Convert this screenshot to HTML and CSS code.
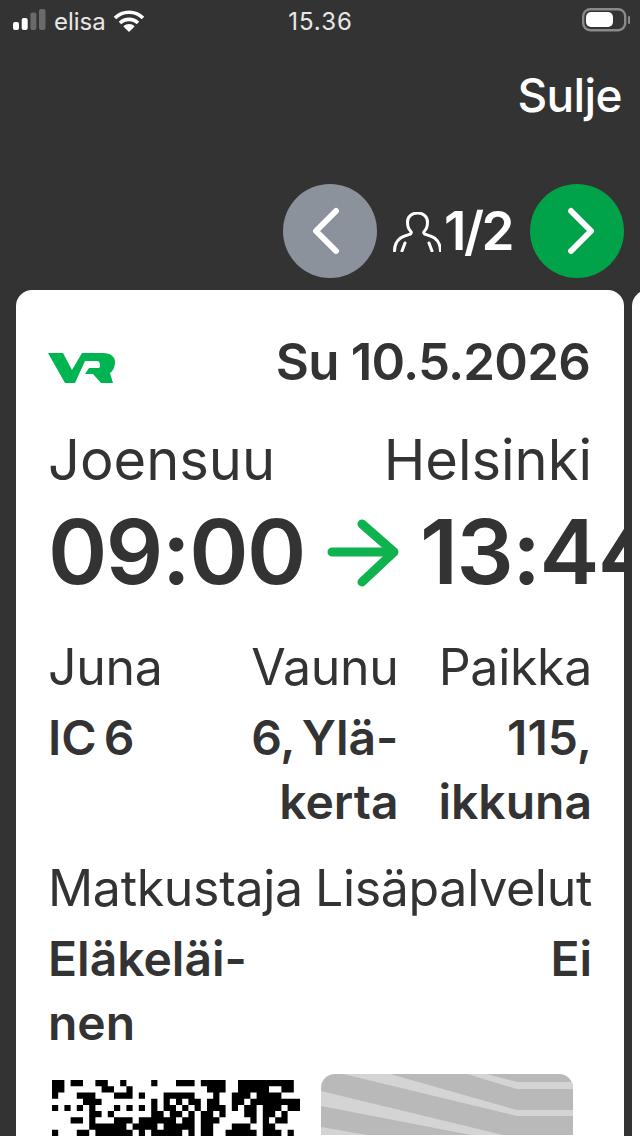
FILE: index.html
```html
<!DOCTYPE html>
<html lang="fi">
<head>
<meta charset="utf-8">
<title>Lippu</title>
<link rel="stylesheet" href="styles.css">
</head>
<body>
<div class="status">
  <div class="status-left">
    <svg class="signal" width="35" height="24" viewBox="0 0 35 24"><rect x="1" y="13" width="6" height="8" rx="2" fill="#fff"/><rect x="9.700" y="9" width="6" height="12" rx="2" fill="#fff"/><rect x="18.400" y="3.500" width="6" height="17.500" rx="2" fill="#6a6a6a"/><rect x="27" y="0" width="6.500" height="21" rx="2" fill="#6a6a6a"/></svg>
    <span>elisa</span>
    <svg class="wifi" width="32" height="24" viewBox="0 0 32 24"><path d="M2 9a20 20 0 0 1 28 0M7 14a13 13 0 0 1 18 0M11.500 18.500a6.500 6.500 0 0 1 9 0" fill="none" stroke="#fff" stroke-width="3.600"/><path d="M16 23l-4-4a6 6 0 0 1 8 0z" fill="#fff"/></svg>
  </div>
  <div class="clock">15.36</div>
  <div class="status-right">
    <svg width="48" height="26" viewBox="0 0 48 26"><rect x="1.200" y="1.200" width="42" height="21" rx="7" fill="none" stroke="#8a8a8a" stroke-width="2.400"/><rect x="4" y="4" width="27" height="15" rx="5" fill="#fff"/><rect x="46" y="8" width="2" height="8" rx="1" fill="#8a8a8a"/></svg>
  </div>
</div>
<div class="close-row"><span>Sulje</span></div>
<div class="nav-row">
  <div class="circle grey"><svg width="40" height="48" viewBox="0 0 40 48"><path d="M26 4L6 24l20 20" fill="none" stroke="#fff" stroke-width="6" stroke-linecap="round" stroke-linejoin="round"/></svg></div>
  <div class="count">
    <svg width="48" height="40" viewBox="0 0 48 40"><path d="M1.500 39c0-6 2-10 6-13 3-2 7-3 10-4 1-1 1-2 0-3-2-2-3-5-3-9 0-5 4-9 10-9s10 4 10 9c0 4-1 7-3 9-1 1-1 2 0 3 3 1 7 2 10 4 4 3 6 7 6 13M9 39l3-8M39 39l-3-8" fill="none" stroke="#fff" stroke-width="3" stroke-linecap="round" stroke-linejoin="round"/></svg>
    <span>1/2</span>
  </div>
  <div class="circle green"><svg width="40" height="48" viewBox="0 0 40 48"><path d="M14 4l20 20-20 20" fill="none" stroke="#fff" stroke-width="6" stroke-linecap="round" stroke-linejoin="round"/></svg></div>
</div>
<div class="cards">
  <section class="card">
    <div class="head">
      <svg class="logo" width="68" height="30" viewBox="0 0 68 30"><path d="M0 0h15l9 17L34 0h21c8 0 12 4 12 9 0 5-2 9-5 11l3 10H53l-8-9h-8l4-6h9c2 0 2-1 2-3 0-2-1-4-3-4H37L27 30H17z" fill="#00b451"/></svg>
      <div class="date">Su 10.5.2026</div>
    </div>
    <div class="stations"><span>Joensuu</span><span>Helsinki</span></div>
    <div class="times">
      <span>09:00</span>
      <svg class="arrow" width="74" height="72" viewBox="0 0 74 72"><path d="M6 36h62M36 8l32 28-32 30" fill="none" stroke="#0fb24e" stroke-width="9" stroke-linecap="round" stroke-linejoin="round"/></svg>
      <span>13:44</span>
    </div>
    <div class="seats">
      <div class="cell"><div class="label">Juna</div><div class="value">IC 6</div></div>
      <div class="cell end"><div class="label">Vaunu</div><div class="value">6, Ylä-<br>kerta</div></div>
      <div class="cell end"><div class="label">Paikka</div><div class="value">115,<br>ikkuna</div></div>
    </div>
    <div class="passenger">
      <div class="cell"><div class="label">Matkustaja</div><div class="value">Eläkeläi-<br>nen</div></div>
      <div class="cell end"><div class="label">Lisäpalvelut</div><div class="value">Ei</div></div>
    </div>
    <div class="codes">
      <svg class="qr" width="248" height="56" viewBox="0 0 40 9"><path d="M0 .5h2M3 .5h2M7 .5h2M11 .5h1M16 .5h1M20 .5h3M24 .5h4M30 .5h9M0 1.500h2M8 1.500h2M12 1.500h1M25 1.500h3M30 1.500h5M37 1.500h2M0 2.500h1M4 2.500h3M10 2.500h3M14 2.500h1M18 2.500h5M26 2.500h1M29 2.500h3M33 2.500h4M5 3.500h3M16 3.500h1M18 3.500h1M20 3.500h1M22 3.500h2M25 3.500h2M29 3.500h2M32 3.500h8M0 4.500h1M2 4.500h1M4 4.500h1M6 4.500h1M10 4.500h1M12 4.500h1M14 4.500h1M16 4.500h1M18 4.500h2M21 4.500h1M23 4.500h1M25 4.500h3M29 4.500h1M31 4.500h2M34 4.500h3M38 4.500h2M6 5.500h2M9 5.500h1M16 5.500h2M19 5.500h2M22 5.500h1M24 5.500h2M27 5.500h1M31 5.500h2M34 5.500h2M37 5.500h1M3 6.500h2M6 6.500h1M10 6.500h3M14 6.500h6M21 6.500h2M24 6.500h3M32 6.500h1M34 6.500h1M36 6.500h2M6 7.500h6M13 7.500h4M18 7.500h5M24 7.500h2M29 7.500h3M34 7.500h2M0 8.500h1M4 8.500h2M7 8.500h6M14 8.500h1M16 8.500h5M22 8.500h1M24 8.500h2M28 8.500h5M34 8.500h3M38 8.500h1" fill="none" stroke="#000" stroke-width="1"/></svg>
      <div class="photo"><svg width="252" height="61" viewBox="0 0 252 61"><rect width="252" height="61" fill="#b9b9b9"/><path d="M22 0h47l127 36h56v6h-56zM0 17l182 44h-32L0 32zM166 0l30 8h56v7h-56L146 0zM0 53l46 8H0z" fill="#d4d4d4"/></svg></div>
    </div>
  </section>
  <div class="next-card"></div>
</div>
</body>
</html>
```
FILE: styles.css
```css
* { box-sizing: border-box; }
html, body { margin: 0; height: 1136px; overflow: hidden; }
body {
  background: #333333;
  color: #333333;
  font-family: Inter, "Liberation Sans", sans-serif;
  display: flex;
  flex-direction: column;
}
.status {
  height: 40px;
  display: grid;
  grid-template-columns: 1fr auto 1fr;
  align-items: center;
  color: #e8e8e8;
  font-size: 24px;
  padding: 2px 10px 0 12px;
  flex: none;
}
.status-left { display: flex; align-items: center; gap: 7px; }
.status-right { display: flex; justify-content: flex-end; }
.clock { letter-spacing: 1px; margin-left: -1px; }
.close-row {
  height: 104px;
  padding: 28px 18px 0 0;
  display: flex;
  justify-content: flex-end;
  align-items: flex-start;
  color: #fff;
  font-size: 46px;
  line-height: 54px;
  font-weight: 500;
  letter-spacing: -0.6px;
  flex: none;
}
.nav-row {
  display: flex;
  justify-content: flex-end;
  align-items: center;
  gap: 16px;
  height: 94px;
  padding-right: 16px;
  margin-top: 40px;
  flex: none;
}
.circle {
  width: 94px;
  height: 94px;
  border-radius: 50%;
  display: flex;
  align-items: center;
  justify-content: center;
}
.grey { background: #8c929b; }
.green { background: #00a34a; }
.count {
  display: flex;
  align-items: center;
  gap: 3px;
  margin-right: 2px;
  color: #fff;
  font-size: 53px;
  font-weight: 600;
  letter-spacing: -2.500px;
}
.count svg { margin-top: 2px; }
.cards {
  display: flex;
  gap: 8px;
  margin: 12px 0 0 16px;
  flex: 1;
  overflow: hidden;
}
.card {
  width: 608px;
  flex: none;
  background: #fff;
  border-radius: 16px 16px 0 0;
  padding: 32px 32px 0;
  overflow: hidden;
}
.next-card {
  width: 608px;
  flex: none;
  background: #fff;
  border-radius: 16px 16px 0 0;
}
.head {
  display: flex;
  justify-content: space-between;
  align-items: center;
  height: 82px;
}
.logo { width: 68px; height: 30px; margin-top: 10px; }
.date { font-size: 51px; font-weight: 600; letter-spacing: -0.800px; margin: 0 2px 4px 0; }
.stations {
  display: flex;
  justify-content: space-between;
  font-size: 56px;
  line-height: 64px;
  margin-top: 24px;
}
.times {
  display: flex;
  align-items: center;
  gap: 22px;
  font-size: 90px;
  line-height: 96px;
  font-weight: 600;
  letter-spacing: -1.500px;
  white-space: nowrap;
  margin-top: 12px;
}
.times span { flex: none; }
.arrow { flex: none; margin: 0 -2px 0 -1px; }
.seats {
  display: grid;
  grid-template-columns: 1fr auto auto;
  column-gap: 40px;
  margin-top: 35px;
}
.passenger {
  display: flex;
  justify-content: space-between;
  margin-top: 22px;
}
.end { text-align: right; }
.label { font-size: 50px; line-height: 64px; letter-spacing: -0.3px; }
.value { font-size: 48px; line-height: 64px; font-weight: 600; word-spacing: -5px; margin-top: 7px; }
.codes {
  display: flex;
  gap: 21px;
  margin-top: 19px;
  align-items: flex-start;
}
.qr { flex: none; margin-top: 6px; margin-left: 4px; filter: blur(0.6px); }
.photo {
  width: 252px;
  height: 61px;
  border-radius: 14px 14px 0 0;
  overflow: hidden;
  flex: none;
  font-size: 0;
}
```
